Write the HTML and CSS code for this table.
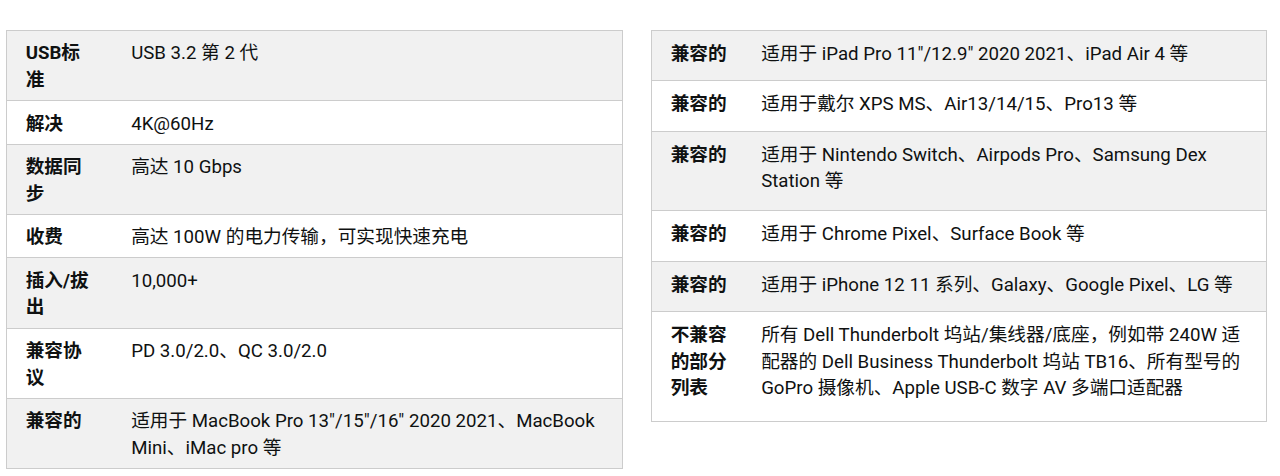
FILE: index.html
```html
<!DOCTYPE html>
<html lang="zh-CN">
<head>
<meta charset="utf-8">
<title>规格</title>
<link rel="stylesheet" href="styles.css">
</head>
<body>
<div class="specs">
  <table class="spec spec-left">
    <tbody>
      <tr><th>USB标准</th><td>USB 3.2 第 2 代</td></tr>
      <tr><th>解决</th><td>4K@60Hz</td></tr>
      <tr><th>数据同步</th><td>高达 10 Gbps</td></tr>
      <tr><th>收费</th><td>高达 100W 的电力传输，可实现快速充电</td></tr>
      <tr><th>插入/拔出</th><td>10,000+</td></tr>
      <tr><th>兼容协议</th><td>PD 3.0/2.0、QC 3.0/2.0</td></tr>
      <tr><th>兼容的</th><td>适用于 MacBook Pro 13"/15"/16" 2020 2021、MacBook Mini、iMac pro 等</td></tr>
    </tbody>
  </table>
  <table class="spec spec-right">
    <tbody>
      <tr><th>兼容的</th><td>适用于 iPad Pro 11"/12.9" 2020 2021、iPad Air 4 等</td></tr>
      <tr><th>兼容的</th><td>适用于戴尔 XPS MS、Air13/14/15、Pro13 等</td></tr>
      <tr class="two-line"><th>兼容的</th><td>适用于 Nintendo Switch、Airpods Pro、Samsung Dex Station 等</td></tr>
      <tr><th>兼容的</th><td>适用于 Chrome Pixel、Surface Book 等</td></tr>
      <tr><th>兼容的</th><td>适用于 iPhone 12 11 系列、Galaxy、Google Pixel、LG 等</td></tr>
      <tr class="three-line"><th>不兼容的部分列表</th><td>所有 Dell Thunderbolt 坞站/集线器/底座，例如带 240W 适配器的 Dell Business Thunderbolt 坞站 TB16、所有型号的 GoPro 摄像机、Apple USB-C 数字 AV 多端口适配器</td></tr>
    </tbody>
  </table>
</div>
</body>
</html>
```
FILE: styles.css
```css
html, body {
  margin: 0;
  padding: 0;
  background: #ffffff;
}

body {
  font-family: Roboto, "Noto Sans CJK SC", sans-serif;
  font-size: 18.67px;
  line-height: 26.67px;
  color: #0f1111;
}

.specs {
  display: flex;
  align-items: flex-start;
  gap: 28px;
  padding: 30px 0 0 6px;
}

.spec {
  border-collapse: collapse;
  table-layout: fixed;
  width: 617px;
  border: 1px solid #cccccc;
}

.spec tr {
  border-top: 1px solid #cccccc;
}

.spec tr:nth-child(odd) {
  background: #f1f1f1;
}

.spec tr:nth-child(even) {
  background: #ffffff;
}

.spec th,
.spec td {
  vertical-align: top;
  text-align: left;
  box-sizing: border-box;
}

.spec th {
  font-weight: 700;
}

.spec td {
  font-weight: 400;
}

/* left table */
.spec-left th {
  width: 106px;
  padding: 9.33px 18.67px 6.5px 18.67px;
}

.spec-left td {
  padding: 9.33px 18.67px 6.5px 18.67px;
}

/* right table */
.spec-right {
  width: 616px;
}

.spec-right th {
  width: 91px;
  padding: 10px 14px 12.7px 18.67px;
}

.spec-right td {
  padding: 10px 18.67px 12.7px 18.67px;
}

.spec-right .two-line th,
.spec-right .two-line td {
  padding-bottom: 15.2px;
}

.spec-right .three-line th,
.spec-right .three-line td {
  padding-bottom: 18.8px;
}
```
